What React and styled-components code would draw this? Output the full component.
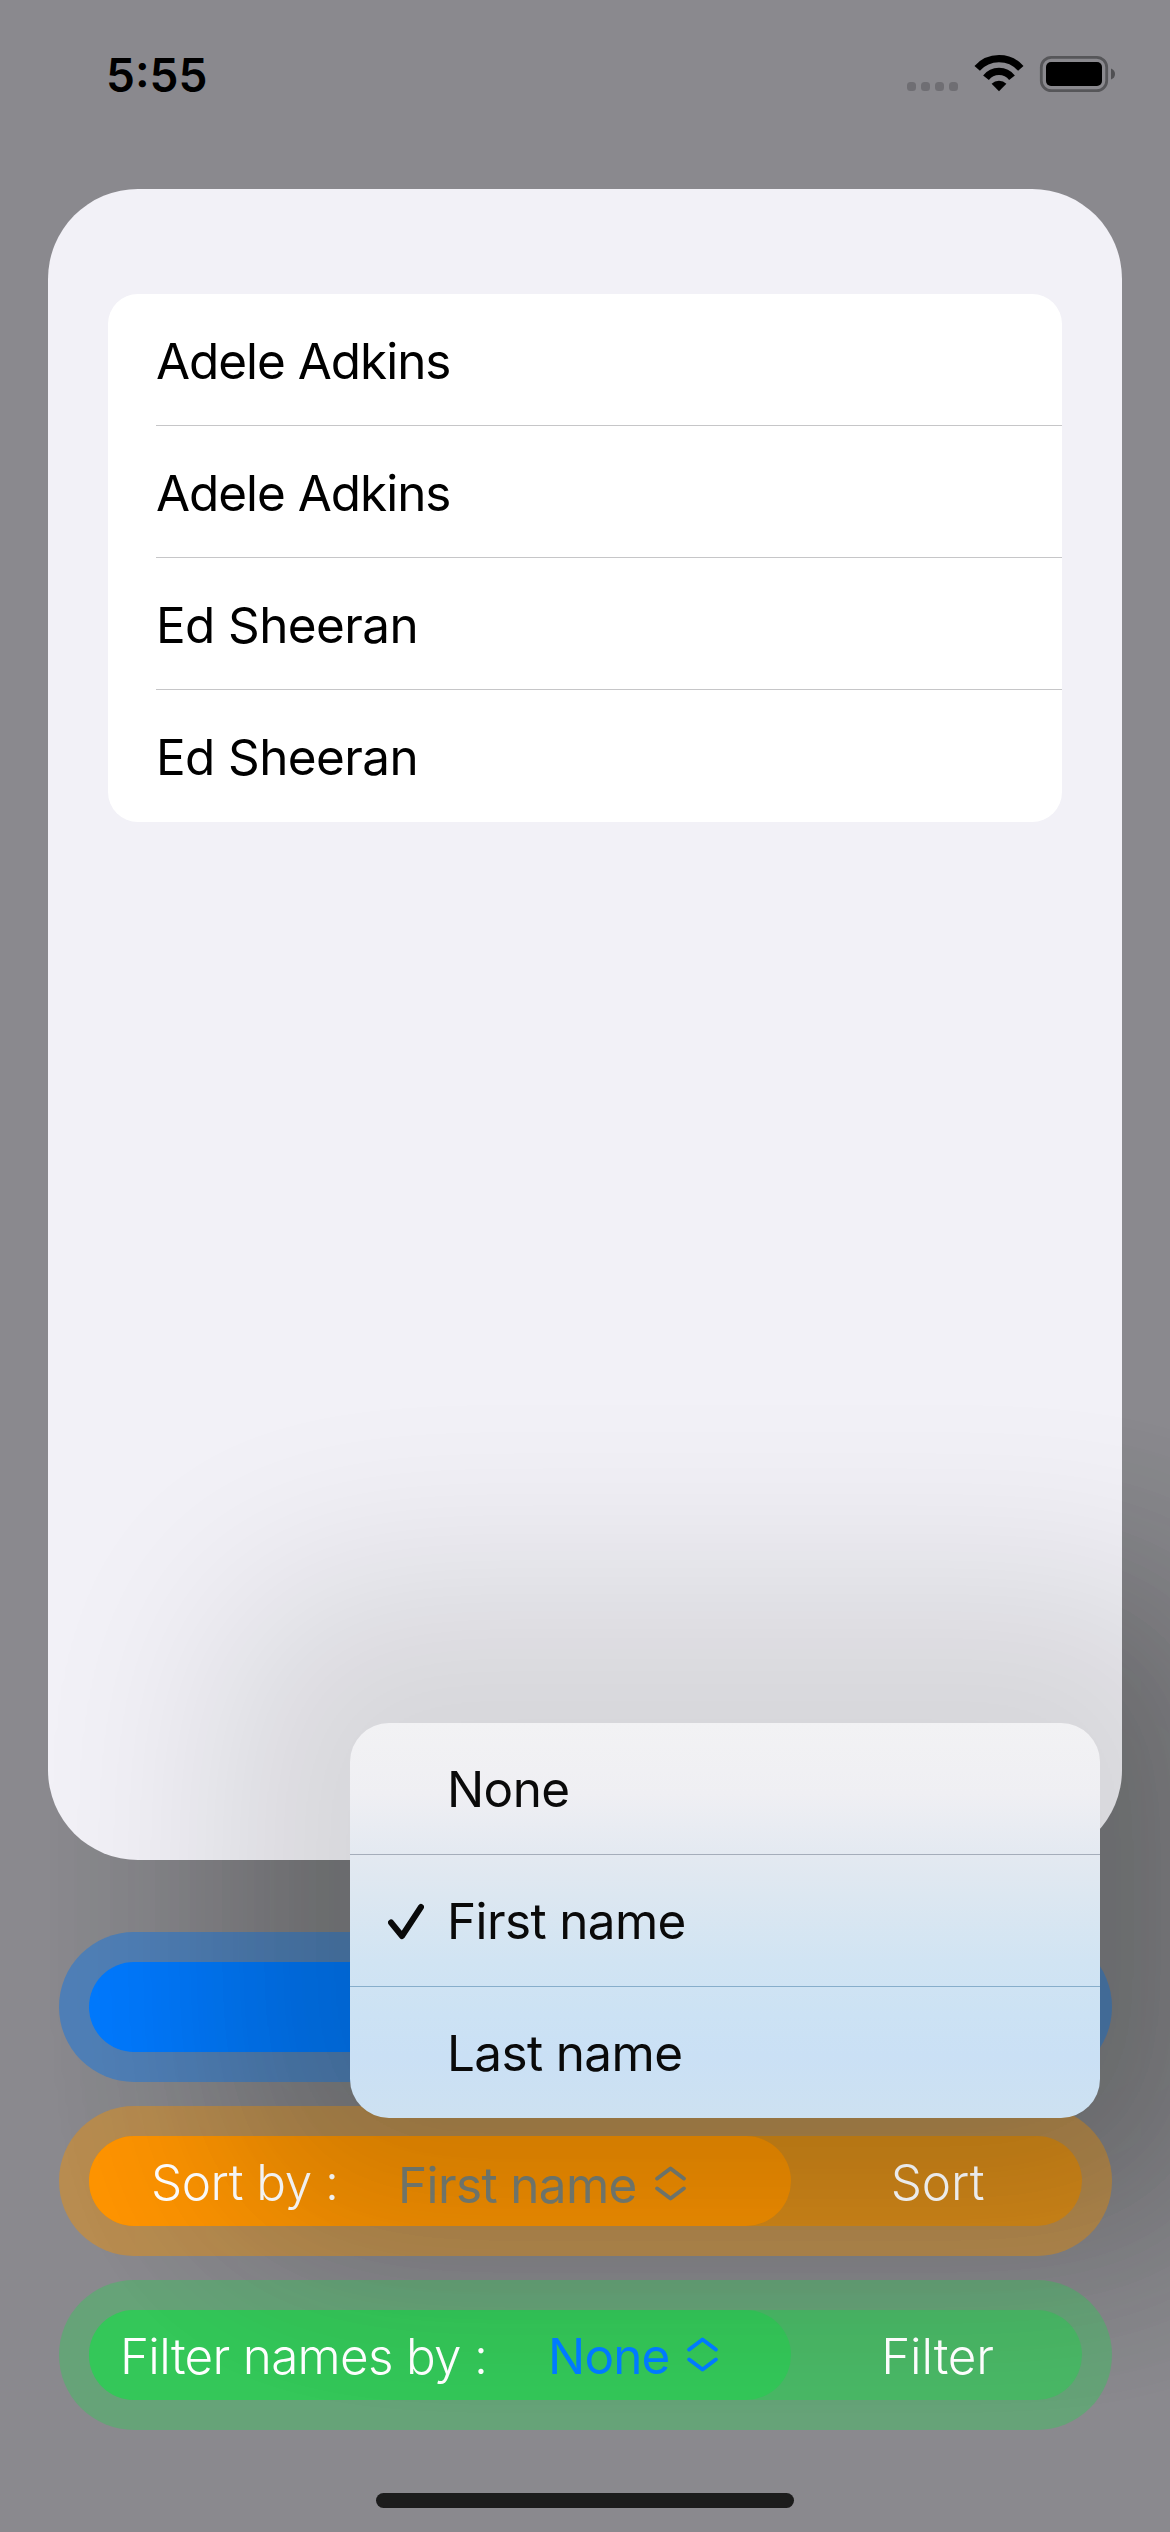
import React from "react";
import styled, { createGlobalStyle } from "styled-components";

const Global = createGlobalStyle`
  * { box-sizing: border-box; }
  body { margin: 0; background: #8a898e; font-family: Inter, "Liberation Sans", sans-serif; }
`;

const Screen = styled.div`
  position: relative;
  width: 1170px;
  height: 2532px;
  overflow: hidden;
  display: flex;
  flex-direction: column;
  background: #8a898e;
  color: #000;
`;

const StatusBar = styled.header`
  height: 189px;
  flex: none;
  display: flex;
  justify-content: space-between;
  padding: 45px 54px 0 106px;
`;

const Time = styled.div`
  font-size: 46px;
  line-height: 60px;
  font-weight: 600;
`;

const Indicators = styled.div`
  display: flex;
  height: 60px;
`;

const Card = styled.main`
  position: relative;
  z-index: 2;
  flex: none;
  height: 1671px;
  margin: 0 48px;
  padding: 105px 60px 0;
  border-radius: 90px;
  background: #f2f1f7;
`;

const List = styled.ul`
  margin: 0;
  padding: 0 0 0 48px;
  list-style: none;
  border-radius: 30px;
  background: #fff;
`;

const Item = styled.li`
  height: 132px;
  padding-top: 35px;
  border-bottom: 1px solid #c6c6c8;
  font-size: 49.4px;
  line-height: 64px;
  letter-spacing: ${(p) => p.$tracking}px;
  white-space: nowrap;
  &:last-child { border-bottom: 0; }
`;

const Controls = styled.section`
  position: relative;
  display: flex;
  flex-direction: column;
  gap: 24px;
  padding: 72px 58px 0 59px;
`;

const Ring = styled.div`
  height: 150px;
  padding: 30px;
  border-radius: 75px;
  background: ${(p) => p.$ring};
`;

const Track = styled.div`
  display: flex;
  height: 90px;
  border-radius: 45px;
  background: ${(p) => p.$track};
`;

const Pill = styled.div`
  width: 702px;
  height: 90px;
  padding-left: ${(p) => p.$inset}px;
  display: flex;
  border-radius: 45px;
  background: ${(p) => p.$fill};
`;

const Label = styled.span`
  position: relative;
  z-index: 2;
  padding-top: 14px;
  width: ${(p) => p.$width}px;
  flex: none;
  font-size: 49.4px;
  line-height: 64px;
  font-weight: 300;
  letter-spacing: ${(p) => p.$tracking || 0}px;
  color: #fff;
  white-space: nowrap;
`;

const Picker = styled.span`
  position: relative;
  z-index: ${(p) => p.$layer || 0};
  display: flex;
  gap: ${(p) => p.$gap}px;
  padding-top: ${(p) => p.$drop}px;
  font-size: 49.4px;
  line-height: 64px;
  letter-spacing: ${(p) => p.$tracking}px;
  color: ${(p) => p.$color};
  white-space: nowrap;
`;

const Action = styled(Label)`
  flex: 1;
  width: auto;
  padding-left: 2px;
  text-align: center;
`;

const HomeBar = styled.div`
  position: relative;
  z-index: 4;
  width: 418px;
  height: 15px;
  margin: 63px auto 0;
  border-radius: 8px;
  background: #1c1c1c;
`;

const Shadow = styled.div`
  position: absolute;
  z-index: ${(p) => p.$layer};
  left: 222px;
  top: 1577px;
  width: 1006px;
  height: 664px;
  border-radius: 120px;
  background: #000800;
  opacity: ${(p) => p.$strength};
  filter: blur(100px);
  pointer-events: none;
`;

const Menu = styled.div`
  position: absolute;
  z-index: 4;
  left: 350px;
  top: 1723px;
  width: 750px;
  height: 395px;
  border-radius: 39px;
  background: linear-gradient(#f2f2f4 0%, #efeff3 18%, #e3e9f1 34%, #dce7f1 44%, #d1e4f3 60%, #cce2f4 74%, #cae0f5 84%, #cde1f1 100%);
`;

const Option = styled.div`
  display: flex;
  height: 132px;
  padding: 34px 0 0 38px;
  border-bottom: 1px solid ${(p) => p.$line || "transparent"};
  font-size: 49.4px;
  line-height: 64px;
  letter-spacing: -0.6px;
  color: #0a0a0a;
`;

const CheckSlot = styled.span`
  width: 59px;
  flex: none;
  padding-top: 2px;
  svg { display: block; }
`;

const Chevrons = () => (
  <svg width="31" height="64" viewBox="0 0 31 64" fill="none" stroke="currentColor" strokeWidth="4" strokeLinecap="round" strokeLinejoin="round">
    <path d="M2.2 25.5L15.5 15.5L28.8 25.5M2.2 35.5L15.5 45.5L28.8 35.5" />
  </svg>
);

export default function App() {
  return (
    <Screen>
      <Global />
      <StatusBar>
        <Time>5:55</Time>
        <Indicators>
          <svg width="210" height="60" viewBox="906 45 210 60">
            <g fill="#6f6e73">
              {[907, 921, 935, 949].map((x) => <rect key={x} x={x} y="82" width="9" height="9" rx="3.5" />)}
            </g>
            <g fill="none" stroke="#000" strokeWidth="7.3">
              <path d="M977.2 68.4A29.3 29.3 0 0 1 1020.8 68.4" />
              <path d="M986 77.8A16.5 16.5 0 0 1 1012 77.8" />
            </g>
            <path d="M999 91.3L991.6 83.8A10.5 10.5 0 0 1 1006.4 83.8Z" fill="#000" />
            <rect x="1041.3" y="57.3" width="65.4" height="33.4" rx="10" fill="none" stroke="#565659" strokeWidth="2.8" />
            <rect x="1046" y="62" width="56" height="24" rx="5" fill="#000" />
            <path d="M1111 68.5Q1115 70 1115 74T1111 79.5Z" fill="#505053" />
          </svg>
        </Indicators>
      </StatusBar>
      <Card>
        <List>
          <Item $tracking={-1}>Adele Adkins</Item>
          <Item $tracking={-1}>Adele Adkins</Item>
          <Item $tracking={-0.57}>Ed Sheeran</Item>
          <Item $tracking={-0.57}>Ed Sheeran</Item>
        </List>
      </Card>
      <Shadow $layer={0} $strength={0.06} />
      <Controls>
        <Ring $ring="#5080b8"><Track $track="#007aff" /></Ring>
        <Ring $ring="#b88c50">
          <Track $track="#dc8d1a">
            <Pill $fill="#ff9500" $inset={62}>
              <Label $width={247} $tracking={-0.46}>Sort by :</Label>
              <Picker $color="#7f857b" $drop={17} $gap={18} $tracking={-0.6}>First name<Chevrons /></Picker>
            </Pill>
            <Action>Sort</Action>
          </Track>
        </Ring>
        <Ring $ring="#66a378">
          <Track $track="#4ab866">
            <Pill $fill="#34c759" $inset={31}>
              <Label $width={428} $tracking={-0.69}>Filter names by :</Label>
              <Picker $layer={4} $color="#007aff" $drop={14} $gap={17} $tracking={-0.8}>None<Chevrons /></Picker>
            </Pill>
            <Action $tracking={-0.2}>Filter</Action>
          </Track>
        </Ring>
      </Controls>
      <HomeBar />
      <Shadow $layer={1} $strength={0.09} />
      <Shadow $layer={3} $strength={0.112} />
      <Menu>
        <Option $line="#a5adba"><CheckSlot />None</Option>
        <Option $line="#87aecb">
          <CheckSlot>
            <svg width="36" height="60" viewBox="0 0 36 60" fill="none" stroke="#0a0a0a" strokeWidth="6" strokeLinecap="round" strokeLinejoin="round">
              <path d="M3 31.5L14 45L33 16" />
            </svg>
          </CheckSlot>
          First name
        </Option>
        <Option><CheckSlot />Last name</Option>
      </Menu>
    </Screen>
  );
}
